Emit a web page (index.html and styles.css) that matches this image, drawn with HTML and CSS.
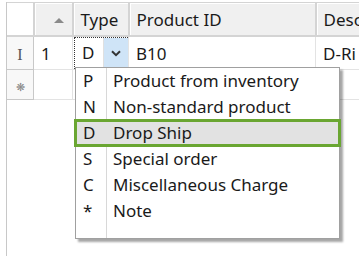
FILE: index.html
```html
<!DOCTYPE html>
<html lang="en">
<head>
<meta charset="UTF-8">
<title>Order lines</title>
<link rel="stylesheet" href="styles.css">
</head>
<body>
  <div class="grid">
    <table class="lines">
      <colgroup>
        <col class="c-sel">
        <col class="c-num">
        <col class="c-type">
        <col class="c-prod">
        <col class="c-desc">
      </colgroup>
      <tr class="head">
        <th class="sel"></th>
        <th class="num"><span class="sort"></span></th>
        <th>Type</th>
        <th>Product ID</th>
        <th>Desc</th>
      </tr>
      <tr class="row">
        <td class="sel"><span class="ibeam">I</span></td>
        <td>1</td>
        <td class="type">
          <div class="combo">
            <span class="val">D</span>
            <span class="btn">
              <svg width="10" height="7" viewBox="0 0 10 7"><path d="M1 1.2 L5 5.2 L9 1.2" fill="none" stroke="#333" stroke-width="2"/></svg>
            </span>
          </div>
        </td>
        <td>B10</td>
        <td>D-Ri</td>
      </tr>
      <tr class="row new">
        <td class="sel"><span class="star">&#x274B;</span></td>
        <td></td>
        <td></td>
        <td></td>
        <td></td>
      </tr>
    </table>

    <div class="popup">
      <ul class="list">
        <li><span class="code">P</span><span class="name">Product from inventory</span></li>
        <li><span class="code">N</span><span class="name">Non-standard product</span></li>
        <li class="picked"><span class="code">D</span><span class="name">Drop Ship</span></li>
        <li><span class="code">S</span><span class="name">Special order</span></li>
        <li><span class="code">C</span><span class="name">Miscellaneous Charge</span></li>
        <li><span class="code">*</span><span class="name">Note</span></li>
      </ul>
    </div>
  </div>
</body>
</html>
```

FILE: styles.css
```css
body {
  margin: 0;
  background: #fff;
  font-family: "Noto Sans", "Open Sans", sans-serif;
  font-size: 17px;
  color: #1a1a1a;
  overflow: hidden;
}
.grid {
  position: relative;
  height: 256px;
  padding: 2px 0 0 6px;
  box-sizing: border-box;
}
.grid::before {
  content: "";
  position: absolute;
  left: 6px;
  top: 2px;
  bottom: 0;
  border-left: 1px solid #c8c8c8;
}
.lines {
  border-collapse: collapse;
  table-layout: fixed;
  width: 353px;
}
.c-sel { width: 27px; }
.c-num { width: 39px; }
.c-type { width: 56px; }
.c-prod { width: 187px; }
.c-desc { width: 44px; }
.lines th,
.lines td {
  padding: 0 0 0 7px;
  text-align: left;
  white-space: nowrap;
  overflow: hidden;
}
.head th {
  height: 32px;
  background: #f0f0f0;
  font-weight: normal;
  border-top: 1px solid #d4d4d4;
  border-right: 2px solid #d4d4d4;
  border-bottom: 2px solid #d4d4d4;
  box-shadow: inset 1px 1px 0 #fff;
}
.head th.sel {
  background: #fff;
}
.row td {
  height: 32px;
  border: 1px solid #e3e3e3;
}
.row.new td {
  height: 29px;
}
.row td.sel {
  border: 1px solid #c8c8c8;
  text-align: center;
  padding: 0;
  background: #f8f8f8;
}
th.num {
  text-align: right;
  padding-right: 8px;
}
.sort {
  display: inline-block;
  width: 0;
  height: 0;
  border-left: 5px solid transparent;
  border-right: 5px solid transparent;
  border-bottom: 5px solid #8a8a8a;
  vertical-align: middle;
}
.ibeam {
  font-family: "Liberation Serif", serif;
  font-size: 16px;
  color: #555;
}
.star {
  font-size: 11px;
  color: #888;
}
.lines td.type {
  padding: 0;
}
.combo {
  display: flex;
  align-items: stretch;
  height: 31px;
  margin-left: 1px;
  border-top: 1px dotted #333;
  border-left: 1px dotted #333;
}
.combo .val {
  flex: 1;
  padding-left: 7px;
  line-height: 30px;
}
.combo .btn {
  width: 24px;
  background: #cfe4f7;
  border-left: 1px solid #e0e0e0;
  display: flex;
  align-items: center;
  justify-content: center;
}
.popup {
  position: absolute;
  left: 75px;
  top: 67px;
  width: 265px;
  height: 172px;
  background: #fff;
  border: 1px solid #a0a0a0;
  box-sizing: border-box;
  box-shadow: 3px 3px 2px rgba(0, 0, 0, 0.35);
}
.popup::before {
  content: "";
  position: absolute;
  left: 30px;
  top: 0;
  bottom: 0;
  border-left: 1px solid #d8d8d8;
}
.list {
  list-style: none;
  margin: 0;
  padding: 0;
}
.list li {
  display: flex;
  height: 26px;
  line-height: 26px;
}
.list .code {
  width: 31px;
  padding-left: 7px;
  box-sizing: border-box;
}
.list .name {
  padding-left: 6px;
}
.list li.picked {
  position: relative;
  margin: -1px -2px;
  height: 28px;
  line-height: 22px;
  background: #e2e2e2;
  border: 3px solid #6aa632;
  box-sizing: border-box;
}
.list li.picked .code {
  width: 30px;
  padding-left: 6px;
}
```
